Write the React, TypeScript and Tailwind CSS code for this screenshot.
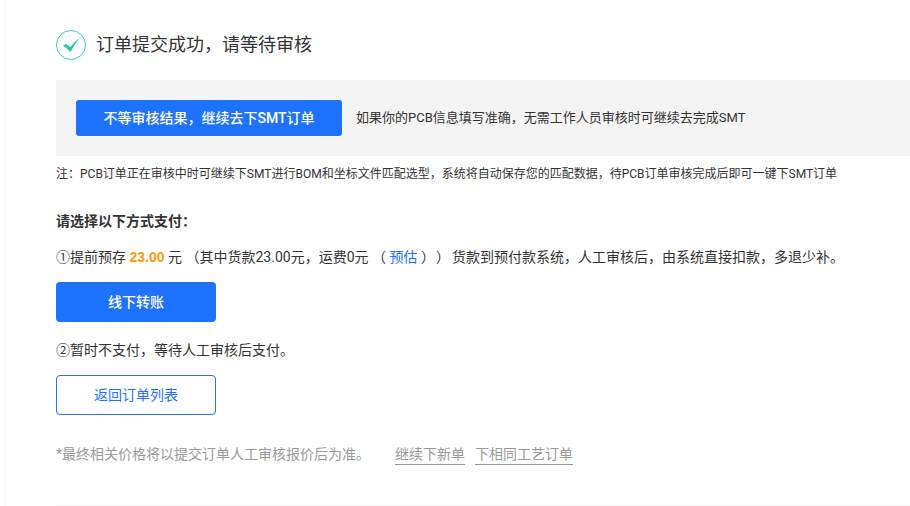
export default function App() {
  return (
    <div className="h-[506px] w-[910px] overflow-hidden bg-white font-['Roboto','Noto_Sans_CJK_SC',sans-serif] text-[#333]">
      <div className="ml-[5px] h-full border-l border-[#f8f8f8] pl-[50px] pt-[30px]">
        <div className="flex h-[30px] items-center gap-[10px]">
          <svg width="30" height="30" viewBox="0 0 30 30" fill="none">
            <circle cx="15" cy="15" r="14.5" stroke="#3ccdbd" strokeWidth="1" />
            <path d="M7 15.5 L10 14 L14.5 17 Q19 11.5 24 7 Q19 13.5 14.5 22 Q11 18 7 15.5 Z" fill="#22c3b0" />
          </svg>
          <h1 className="text-[18px] font-normal leading-[30px] text-[#333]">订单提交成功，请等待审核</h1>
        </div>
        <div className="mt-[20px] flex h-[76px] items-center gap-[14px] bg-[#f4f4f4] pl-[20px]">
          <button className="h-[36px] w-[266px] rounded-[3px] bg-[#1d72ff] text-[14px] font-medium text-white">
            不等审核结果，继续去下SMT订单
          </button>
          <span className="text-[13px] text-[#333]">如果你的PCB信息填写准确，无需工作人员审核时可继续去完成SMT</span>
        </div>
        <p className="mt-[10px] h-[17px] text-[12px] leading-[17px] text-[#333]">
          注：PCB订单正在审核中时可继续下SMT进行BOM和坐标文件匹配选型，系统将自动保存您的匹配数据，待PCB订单审核完成后即可一键下SMT订单
        </p>
        <p className="mt-[28px] h-[20px] text-[14px] font-bold leading-[20px] text-[#333]">请选择以下方式支付：</p>
        <p className="mt-[16px] h-[20px] whitespace-nowrap text-[14px] leading-[20px] text-[#333]">
          ①提前预存 <span className="font-['Liberation_Sans'] font-bold text-[#ff9a0e]">23.00</span> 元 （其中货款23.00元，运费0元 （ <span className="text-[#1d72ff]">预估</span> ）<span className="ml-[1px] inline-block">）</span><span className="ml-[2px]">货款到预付款系统，人工审核后，由系统直接扣款，多退少补。</span>
        </p>
        <button className="mt-[15px] block h-[40px] w-[160px] rounded-[4px] bg-[#1d72ff] text-[14px] font-medium text-white">线下转账</button>
        <p className="mt-[18px] h-[20px] text-[14px] leading-[20px] text-[#333]">②暂时不支付，等待人工审核后支付。</p>
        <button className="mt-[15px] block h-[40px] w-[160px] rounded-[4px] border border-[#1d72ff] bg-white text-[14px] text-[#1d72ff]">返回订单列表</button>
        <div className="mt-[29px] flex h-[20px] items-center text-[14px] leading-[20px] text-[#999]">
          <span>*最终相关价格将以提交订单人工审核报价后为准。</span>
          <a className="ml-[25px] border-b border-[#999]">继续下新单</a>
          <a className="ml-[10px] border-b border-[#999]">下相同工艺订单</a>
        </div>
        <div className="mt-[41px] h-[2px] bg-[#f3f3f6]" />
      </div>
    </div>
  );
}
